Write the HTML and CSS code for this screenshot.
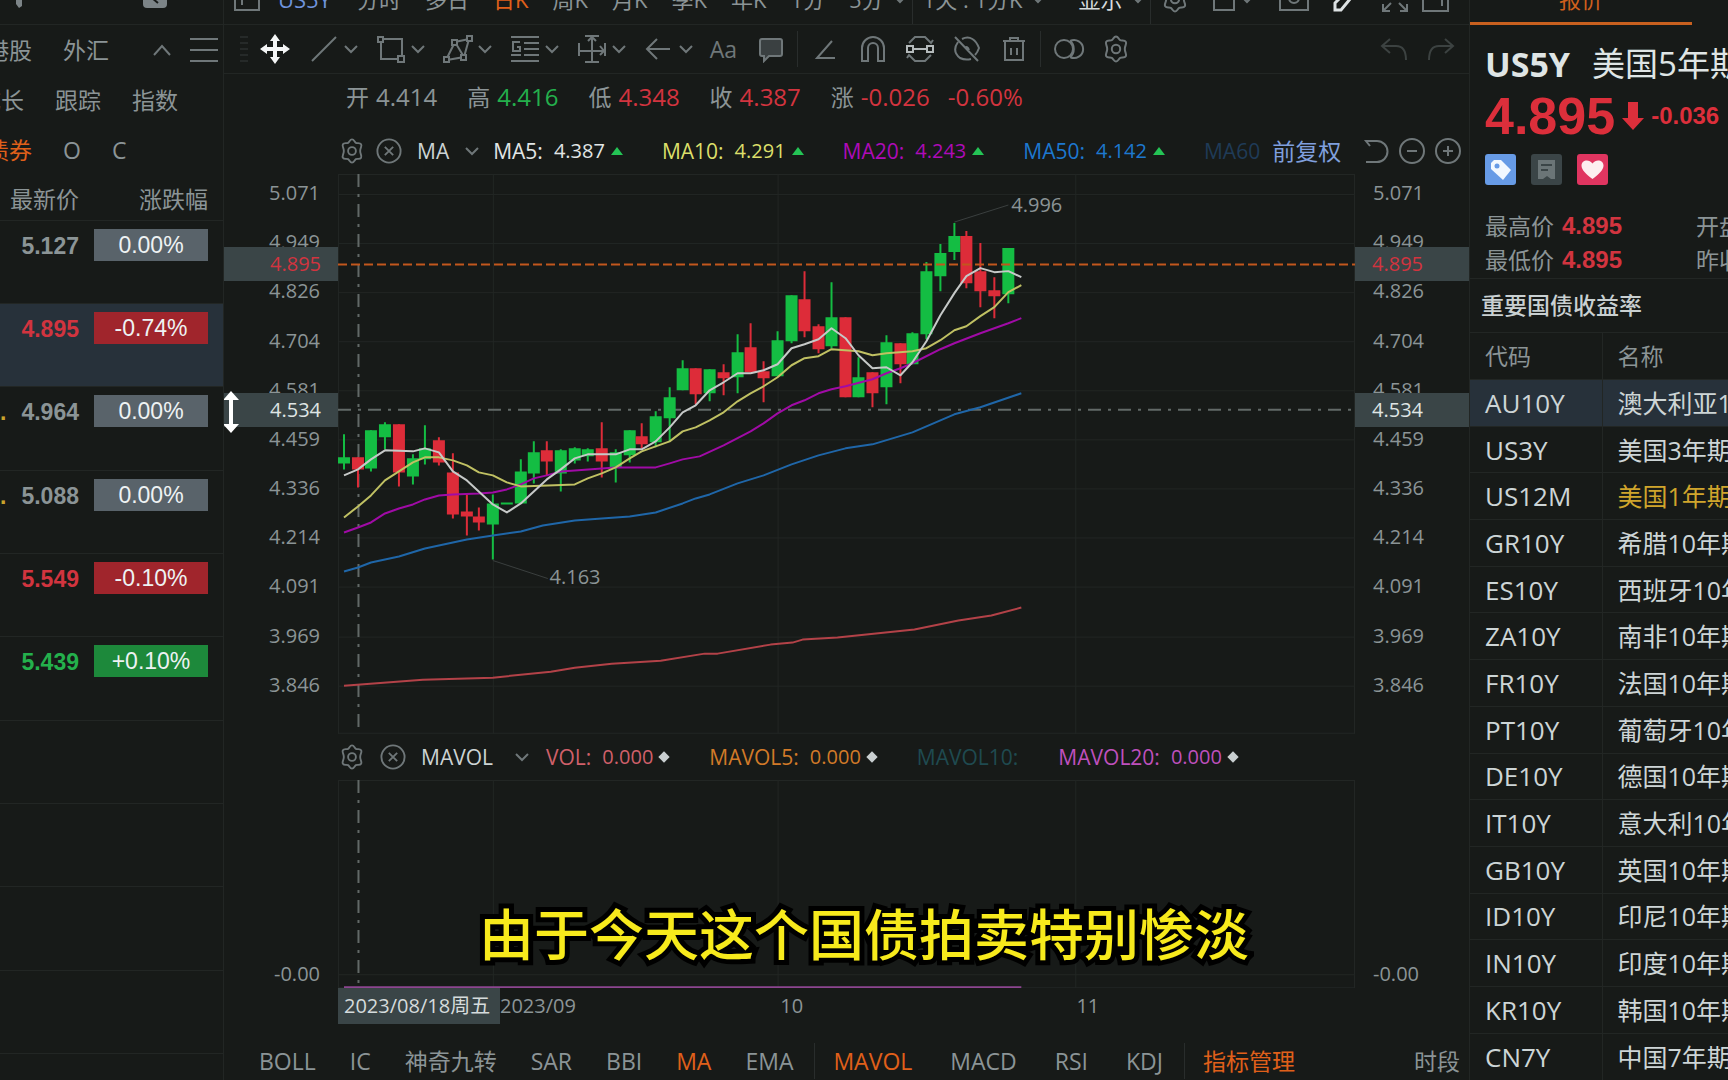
FILE: index.html
```html
<!DOCTYPE html>
<html lang="zh-CN">
<head>
<meta charset="utf-8">
<title>US5Y 美国5年期国债</title>
<link rel="stylesheet" href="styles.css">
</head>
<body>
<svg class="defs" aria-hidden="true">
  <symbol id="gear" viewBox="0 0 28 28"><path d="M14 1.5c2.300 0 2.600 2.800 4.200 3.700s4.300-.6 5.600 1.500-1 3.700-1 7.300 2.200 5.200 1 7.300-4 .6-5.600 1.500-1.900 3.700-4.200 3.700-2.600-2.800-4.200-3.700-4.300.6-5.600-1.500 1-3.700 1-7.300-2.200-5.200-1-7.300 4-.6 5.600-1.500S11.700 1.500 14 1.500z"/><circle cx="14" cy="14" r="4.200"/></symbol>
  <symbol id="close" viewBox="0 0 28 28"><circle cx="14" cy="14" r="12.500"/><path d="M9.500 9.500l9 9M18.500 9.500l-9 9"/></symbol>
  <symbol id="down" viewBox="0 0 14 14"><path d="M1 4l6 6 6-6"/></symbol>
</svg>

<div class="app">
  <aside class="watch">
    <header class="bar">
      <div class="bar-in watch-bar">
        <svg class="ic solid" width="10" height="20" viewBox="0 0 10 20"><path d="M2 0h6v17l-3 2-3-4z"/></svg>
        <svg class="ic solid" width="24" height="18" viewBox="0 0 24 18"><rect width="24" height="18" rx="4"/><path class="cut" d="M9 8l6 5"/></svg>
      </div>
    </header>
    <nav class="cats">
      <div class="cat-row r1">
        <a href="#">港股</a><a href="#">外汇</a>
        <button class="plain fold" aria-label="收起"><svg class="ic" width="20" height="14" viewBox="0 0 20 14"><path d="M2 12l8-9 8 9"/></svg></button>
        <button class="plain" aria-label="菜单"><svg class="ic" width="28" height="28" viewBox="0 0 28 28"><path d="M0 3h28M0 14h28M0 25h28"/></svg></button>
      </div>
      <div class="cat-row r2"><a href="#">成长</a><a href="#">跟踪</a><a href="#">指数</a></div>
      <div class="cat-row r3"><a href="#" class="on">债券</a><a href="#">O</a><a href="#">C</a></div>
    </nav>
    <table class="list">
      <colgroup><col class="c-dot"><col class="c-price"><col></colgroup>
      <thead><tr><th colspan="2">最新价</th><th>涨跌幅</th></tr></thead>
      <tbody>
        <tr><td></td><td>5.127</td><td><span class="pct">0.00%</span></td></tr>
        <tr class="sel"><td></td><td class="dn">4.895</td><td><span class="pct bg-dn">-0.74%</span></td></tr>
        <tr><td class="dot">.</td><td>4.964</td><td><span class="pct">0.00%</span></td></tr>
        <tr><td class="dot">.</td><td>5.088</td><td><span class="pct">0.00%</span></td></tr>
        <tr><td></td><td class="dn">5.549</td><td><span class="pct bg-dn">-0.10%</span></td></tr>
        <tr><td></td><td class="up">5.439</td><td><span class="pct bg-up">+0.10%</span></td></tr>
        <tr><td></td><td></td><td></td></tr>
        <tr><td></td><td></td><td></td></tr>
        <tr><td></td><td></td><td></td></tr>
        <tr><td></td><td></td><td></td></tr>
        <tr><td></td><td></td><td></td></tr>
      </tbody>
    </table>
  </aside>

  <main class="center">
    <header class="bar">
      <div class="bar-in periods">
        <svg class="ic" width="26" height="24" viewBox="0 0 26 24"><path d="M1 0v23h24V0M8 0v18"/></svg>
        <a href="#" class="sym">US5Y</a>
        <a href="#">分时</a><a href="#">多日</a><a href="#" class="on">日K</a><a href="#">周K</a><a href="#">月K</a><a href="#">季K</a><a href="#">年K</a><a href="#">1分</a><a href="#">5分</a>
        <svg class="ic chev" width="14" height="14"><use href="#down"/></svg>
        <span class="sep"></span>
        <a href="#">1天 : 1分K</a>
        <svg class="ic chev" width="14" height="14"><use href="#down"/></svg>
        <a href="#" class="bright">显示</a>
        <svg class="ic chev" width="14" height="14"><use href="#down"/></svg>
        <span class="sep"></span>
        <svg class="ic" width="28" height="28"><use href="#gear"/></svg>
        <svg class="ic" width="42" height="24" viewBox="0 0 42 24"><path d="M1 0v23h20V0M30 11l4 4 4-4"/></svg>
        <svg class="ic" width="30" height="24" viewBox="0 0 30 24"><path d="M1 0v23h28V0"/><circle cx="15" cy="11" r="5"/></svg>
        <svg class="ic pen" width="24" height="26" viewBox="0 0 24 26"><path d="M17 2l5 5L8 24H2v-7z"/></svg>
        <svg class="ic" width="28" height="28" viewBox="0 0 28 28"><path d="M10 18l-8 8M2 19v7h7M18 18l8 8M26 19v7h-7"/></svg>
        <svg class="ic side" width="28" height="26" viewBox="0 0 28 26"><path d="M1 0v25h25V0M20 8v12"/></svg>
      </div>
    </header>

    <div class="tools">
      <svg class="grip" width="8" height="28" viewBox="0 0 8 28"><path d="M0 2h8M0 8h8M0 14h8M0 20h8M0 26h8"/></svg>
      <button class="tool move" aria-label="移动"><svg width="30" height="30" viewBox="0 0 30 30"><path d="M15 0l5 7h-3v6h6v-3l7 5-7 5v-3h-6v6h3l-5 7-5-7h3v-6H7v3l-7-5 7-5v3h6V7h-3z"/></svg></button>
      <button class="tool drop" aria-label="线段"><svg class="ic" width="30" height="30" viewBox="0 0 30 30"><path d="M3 27L27 3"/></svg><svg class="ic" width="14" height="14"><use href="#down"/></svg></button>
      <button class="tool drop" aria-label="矩形"><svg class="ic" width="30" height="30" viewBox="0 0 30 30"><path d="M8 5h18v17M5 8v17h17"/><rect x="2" y="3" width="5" height="5"/><rect x="22" y="22" width="6" height="6"/></svg><svg class="ic" width="14" height="14"><use href="#down"/></svg></button>
      <button class="tool drop" aria-label="形态"><svg class="ic" width="30" height="30" viewBox="0 0 30 30"><path d="M4 24l8-16 14-3-5 18-17 3M12 8l9 15"/><rect class="fillbg" x="1" y="23" width="5" height="5"/><rect class="fillbg" x="9" y="6" width="5" height="5"/><rect class="fillbg" x="24" y="2" width="5" height="5"/><rect class="fillbg" x="18" y="21" width="5" height="5"/></svg><svg class="ic" width="14" height="14"><use href="#down"/></svg></button>
      <button class="tool drop" aria-label="黄金分割"><svg class="ic" width="30" height="30" viewBox="0 0 30 30"><path d="M1 3h28M14 9h15M14 15h15M14 21h15M1 27h28M1 21h10M10 8H3v9h7v-4H7"/></svg><svg class="ic" width="14" height="14"><use href="#down"/></svg></button>
      <button class="tool drop" aria-label="测量"><svg class="ic" width="30" height="30" viewBox="0 0 30 30"><path d="M8 2h14M8 28h14M15 3v24M2 9v13M28 9v13M3 17h24M11 7l4-4 4 4M23 12l4 5-4 4"/></svg><svg class="ic" width="14" height="14"><use href="#down"/></svg></button>
      <button class="tool drop" aria-label="箭头"><svg class="ic" width="30" height="30" viewBox="0 0 30 30"><path d="M26 15H3M13 5L3 15l10 10"/></svg><svg class="ic" width="14" height="14"><use href="#down"/></svg></button>
      <button class="tool aa">Aa</button>
      <button class="tool" aria-label="注释"><svg class="ic" width="26" height="28" viewBox="0 0 26 28"><path class="tint" d="M4 4h18a2 2 0 012 2v13a2 2 0 01-2 2H11l-5 5v-5H4a2 2 0 01-2-2V6a2 2 0 012-2z"/></svg></button>
      <span class="sep"></span>
      <button class="tool" aria-label="角度"><svg class="ic" width="24" height="28" viewBox="0 0 24 28"><path d="M18 6L3 23h18"/></svg></button>
      <button class="tool" aria-label="磁吸"><svg class="ic" width="26" height="28" viewBox="0 0 26 28"><path d="M2 26V13a11 11 0 0122 0v13h-6V13a5 5 0 00-10 0v13z"/></svg></button>
      <button class="tool" aria-label="连续绘制"><svg class="ic lit" width="28" height="28" viewBox="0 0 28 28"><path class="dim" d="M3 8l6-6h10l6 6 2-3M25 20l-6 6H9l-6-6-2 3"/><path d="M8 14h12"/><rect x="1" y="11" width="6" height="6"/><rect x="21" y="11" width="6" height="6"/></svg></button>
      <button class="tool" aria-label="隐藏"><svg class="ic" width="28" height="28" viewBox="0 0 28 28"><path d="M9 4c8-4 14 1 17 9-1 3-2 5-4 7M5 7c-5 7-3 12 2 16 4 2 7 2 11 1M2 2l23 24M12 13c1-2 3-1 4 2"/></svg></button>
      <button class="tool" aria-label="删除"><svg class="ic" width="26" height="28" viewBox="0 0 26 28"><path d="M2 6h22M9 5V3h8v2M4 6v19h18V6M10 13v7M16 13v7"/></svg></button>
      <span class="sep"></span>
      <button class="tool" aria-label="对比"><svg class="ic" width="32" height="24" viewBox="0 0 32 24"><circle cx="11" cy="12" r="9"/><path d="M17 4a9 9 0 110 16M17 4c5 3 5 13 0 16"/></svg></button>
      <button class="tool" aria-label="设置"><svg class="ic" width="28" height="28"><use href="#gear"/></svg></button>
      <button class="tool undo" aria-label="撤销"><svg class="ic" width="28" height="28" viewBox="0 0 28 28"><path d="M10 4L2 11l8 7M2 11h14c6 0 10 4 10 14"/></svg></button>
      <button class="tool" aria-label="重做"><svg class="ic faint" width="28" height="28" viewBox="0 0 28 28"><path d="M18 4l8 7-8 7M26 11H12C6 11 2 15 2 25"/></svg></button>
    </div>

    <div class="ohlc">
      <span><b>开</b><i>4.414</i></span>
      <span><b>高</b><i class="up">4.416</i></span>
      <span><b>低</b><i class="dn">4.348</i></span>
      <span><b>收</b><i class="dn">4.387</i></span>
      <span><b>涨</b><i class="dn">-0.026</i><i class="dn pc">-0.60%</i></span>
    </div>

    <div class="legend main-legend">
      <button class="plain" aria-label="指标设置"><svg class="ic" width="26" height="26"><use href="#gear"/></svg></button>
      <button class="plain x1" aria-label="关闭指标"><svg class="ic" width="26" height="26"><use href="#close"/></svg></button>
      <button class="plain name">MA <svg class="ic" width="14" height="14"><use href="#down"/></svg></button>
      <span class="ind white"><b>MA5:</b><i>4.387</i><s class="tri"></s></span>
      <span class="ind yellow"><b>MA10:</b><i>4.291</i><s class="tri"></s></span>
      <span class="ind magenta"><b>MA20:</b><i>4.243</i><s class="tri"></s></span>
      <span class="ind blue"><b>MA50:</b><i>4.142</i><s class="tri"></s></span>
      <span class="ind navy"><b>MA60</b></span>
      <a href="#" class="adj">前复权</a>
      <span class="zooms">
        <button class="plain" aria-label="重置"><svg class="ic" width="26" height="26" viewBox="0 0 26 26"><path d="M7 8L3 3h11a10 10 0 010 21H3"/></svg></button>
        <button class="plain" aria-label="缩小"><svg class="ic" width="26" height="26" viewBox="0 0 26 26"><circle cx="13" cy="13" r="12"/><path d="M8 13h10"/></svg></button>
        <button class="plain" aria-label="放大"><svg class="ic" width="26" height="26" viewBox="0 0 26 26"><circle cx="13" cy="13" r="12"/><path d="M8 13h10M13 8v10"/></svg></button>
      </span>
    </div>

    <section class="pane price-pane">
      <div class="axis left">
        <span>5.071</span><span>4.949</span><span>4.826</span><span>4.704</span><span>4.581</span><span>4.459</span><span>4.336</span><span>4.214</span><span>4.091</span><span>3.969</span><span>3.846</span>
        <em class="tag dn" style="top:16.1%">4.895</em><em class="tag" style="top:42.1%">4.534</em>
        <svg class="cursor" width="18" height="44" viewBox="0 0 18 44"><path d="M9 1l8 9h-6v24h6L9 43 1 34h6V10H1z"/></svg>
      </div>
      <div class="plot">
        <svg class="chart" viewBox="0 0 1018 559" preserveAspectRatio="none">
          <path class="grid" d="M0 .5H1018M0 558.500H1018M.5 0V559M1017.500 0V559M155.500 0V559M440.500 0V559M738.500 0V559M0 20.500H1018M0 69.500H1018M0 118.500H1018M0 167.500H1018M0 216.500H1018M0 265.500H1018M0 314.500H1018M0 363.500H1018M0 412.500H1018M0 462.500H1018M0 511.500H1018"/>
          <path class="cross" d="M20.500 0V559M0 235.500H1018"/>
          <path class="leader" d="M155 386l55 18M617 48l54-17"/>
          <path class="wick g" d="M6 260V295M33 256V297M47 248V275M75 280V310M87 251V290M155 320V385M183 285V329M196 267V309M223 275V317M237 273V289M250 274V287M278 275V308M292 256V288M318 237V273M332 213V267M345 186V216M372 195V227M400 160V219M440 157V202M454 121V169M494 108V174M521 183V223M549 161V230M575 158V190M589 88V165M603 70V117M617 49V86M671 74V129"/>
          <path class="wick r" d="M20 283V313M61 250V312M101 263V291M115 279V344M129 320V361M141 333V356M209 267V301M264 248V303M304 249V274M358 194V230M386 190V221M413 149V198M426 187V228M467 97V163M481 150V179M508 143V223M535 198V233M563 169V209M629 57V114M643 69V133M657 103V144"/>
          <path class="body g" d="M6 283V289M33 256V294M47 250V263M75 284V302M87 274V285M155 329V350M169 328V330M183 297V329M196 278V299M223 276V299M237 274V286M250 275V282M278 278V293M292 256V281M318 242V268M332 223V244M345 194V216M372 195V219M400 178V203M440 166V202M454 121V167M494 143V172M521 203V223M549 168V213M575 159V190M589 97V160M603 79V102M617 62V78M671 74V120"/>
          <path class="body r" d="M20 283V295M61 250V298M101 266V288M115 298V340M129 337V342M141 342V348M209 276V287M264 274V287M304 262V270M358 194V220M386 198V204M413 173V198M426 197V204M467 125V157M481 152V175M508 143V223M535 198V219M563 169V190M629 62V109M643 97V117M657 116V122"/>
          <path class="last" d="M0 90.500H1018"/>
          <polyline class="ma m250" points="6,511 85,505 155,503 213,497 237,493 274,489 323,486 367,479 380,479 433,470 455,468 465,465 500,463 577,455 621,446 654,441 684,433"/>
          <polyline class="ma m50" points="6,397 20,393 33,388 61,382 87,374 115,368 129,365 155,361 183,357 205,351 237,346 264,344 292,342 318,338 345,329 358,324 372,320 400,309 426,301 454,290 481,281 508,274 535,270 575,258 617,240 643,233 684,219"/>
          <polyline class="ma m20" points="6,358 20,353 33,348 47,339 61,334 75,330 87,325 101,321 115,320 141,319 155,318 169,315 183,310 196,304 209,301 223,297 237,296 264,294 278,293 318,293 332,289 345,285 362,282 386,271 413,257 426,249 440,239 454,231 467,226 481,219 494,215 508,212 535,205 549,199 563,194 575,189 603,175 617,169 643,159 671,149 684,144"/>
          <polyline class="ma m10" points="6,343 20,332 33,321 47,306 61,297 75,288 87,283 101,283 115,286 129,291 141,298 155,301 169,308 183,312 237,310 250,304 264,299 278,293 292,284 304,277 332,267 345,257 358,253 372,246 386,238 400,227 413,219 426,212 440,203 454,191 467,184 481,182 494,175 521,177 535,181 549,179 575,177 589,174 603,166 617,156 629,152 643,142 657,133 671,118 684,111"/>
          <polyline class="ma m5" points="6,301 20,295 33,285 47,276 75,277 87,274 101,278 115,297 129,306 155,330 169,338 183,329 209,305 223,295 237,284 250,280 278,280 292,275 304,275 318,267 332,253 345,238 358,231 372,216 386,208 400,199 413,199 426,196 440,190 454,174 467,170 481,165 494,154 508,164 521,181 535,194 549,193 563,201 575,188 589,167 603,141 617,119 629,102 643,94 657,98 671,97 684,103"/>
        </svg>
        <em class="mark" style="left:66.2%;top:5.5%">4.996</em>
        <em class="mark" style="left:20.8%;top:72%">4.163</em>
      </div>
      <div class="axis right">
        <span>5.071</span><span>4.949</span><span>4.826</span><span>4.704</span><span>4.581</span><span>4.459</span><span>4.336</span><span>4.214</span><span>4.091</span><span>3.969</span><span>3.846</span>
        <em class="tag dn" style="top:16.1%">4.895</em><em class="tag" style="top:42.1%">4.534</em>
      </div>
    </section>

    <div class="legend vol-legend">
      <button class="plain" aria-label="指标设置"><svg class="ic" width="26" height="26"><use href="#gear"/></svg></button>
      <button class="plain x2" aria-label="关闭指标"><svg class="ic" width="26" height="26"><use href="#close"/></svg></button>
      <button class="plain name">MAVOL <svg class="ic" width="14" height="14"><use href="#down"/></svg></button>
      <span class="ind pink"><b>VOL:</b><i>0.000</i><s class="dia"></s></span>
      <span class="ind orange"><b>MAVOL5:</b><i>0.000</i><s class="dia"></s></span>
      <span class="ind teal"><b>MAVOL10:</b></span>
      <span class="ind violet"><b>MAVOL20:</b><i>0.000</i><s class="dia"></s></span>
    </div>

    <section class="pane vol-pane">
      <div class="axis left end"><span>-0.00</span></div>
      <div class="plot">
        <svg class="chart" viewBox="0 0 1018 208" preserveAspectRatio="none">
          <path class="grid" d="M0 .5H1018M0 207.500H1018M.5 0V208M1017.500 0V208M155.500 0V208M440.500 0V208M738.500 0V208M0 194.500H1018"/>
          <path class="cross" d="M20.500 0V206"/>
          <path class="volline" d="M6 207H684"/>
        </svg>
      </div>
      <div class="axis right end"><span>-0.00</span></div>
    </section>

    <div class="dates">
      <span class="cur">2023/08/18周五</span><span>2023/09</span><span>10</span><span>11</span>
    </div>

    <nav class="inds">
      <div class="grp"><a href="#">BOLL</a><a href="#">IC</a><a href="#">神奇九转</a><a href="#">SAR</a><a href="#">BBI</a><a href="#" class="on">MA</a><a href="#">EMA</a></div>
      <span class="sep"></span>
      <div class="grp wide"><a href="#" class="on">MAVOL</a><a href="#">MACD</a><a href="#">RSI</a><a href="#">KDJ</a></div>
      <span class="sep"></span>
      <a href="#" class="on">指标管理</a>
      <a href="#" class="seg">时段</a>
    </nav>
  </main>

  <aside class="quote">
    <header class="bar"><a href="#" class="tab">报价</a></header>
    <div class="head">
      <h1><b>US5Y</b><span>美国5年期国债</span></h1>
      <div class="px"><strong>4.895</strong><svg width="22" height="28" viewBox="0 0 22 28"><path d="M6 0h10v16h6L11 28 0 16h6z"/></svg><span>-0.036</span></div>
      <div class="badges">
        <button class="plain" aria-label="标签"><svg width="31" height="31" viewBox="0 0 31 31"><rect width="31" height="31" rx="3" fill="#679be6"/><path d="M6 9l3-3h7l10 10-8 10L6 15z" fill="#f2f8ff"/><circle cx="12" cy="12" r="2.500" fill="#679be6"/></svg></button>
        <button class="plain" aria-label="笔记"><svg width="31" height="31" viewBox="0 0 31 31"><rect width="31" height="31" rx="3" fill="#3b4547"/><path d="M7 6h17v19h-4l-4-3-4 3H7z" fill="#6b7577"/><path d="M10 11h11M10 16h7" stroke="#3b4547" stroke-width="2"/></svg></button>
        <button class="plain" aria-label="自选"><svg width="31" height="31" viewBox="0 0 31 31"><rect width="31" height="31" rx="3" fill="#e03560"/><path d="M15.500 25C9 20 4.500 16 4.500 11.500 4.500 6 12 4.500 15.500 9.500 19 4.500 26.500 6 26.500 11.500 26.500 16 22 20 15.500 25z" fill="#fdeef0"/></svg></button>
      </div>
      <dl class="stats">
        <dt>最高价</dt><dd>4.895</dd><dt>开盘价</dt>
        <dt>最低价</dt><dd>4.895</dd><dt>昨收价</dt>
      </dl>
    </div>
    <h2>重要国债收益率</h2>
    <div class="ytab">
      <table>
        <colgroup><col class="c-code"><col></colgroup>
        <thead><tr><th>代码</th><th>名称</th></tr></thead>
        <tbody>
          <tr class="sel"><td>AU10Y</td><td>澳大利亚10年期</td></tr>
          <tr><td>US3Y</td><td>美国3年期</td></tr>
          <tr><td>US12M</td><td class="gold">美国1年期</td></tr>
          <tr><td>GR10Y</td><td>希腊10年期</td></tr>
          <tr><td>ES10Y</td><td>西班牙10年期</td></tr>
          <tr><td>ZA10Y</td><td>南非10年期</td></tr>
          <tr><td>FR10Y</td><td>法国10年期</td></tr>
          <tr><td>PT10Y</td><td>葡萄牙10年期</td></tr>
          <tr><td>DE10Y</td><td>德国10年期</td></tr>
          <tr><td>IT10Y</td><td>意大利10年期</td></tr>
          <tr><td>GB10Y</td><td>英国10年期</td></tr>
          <tr><td>ID10Y</td><td>印尼10年期</td></tr>
          <tr><td>IN10Y</td><td>印度10年期</td></tr>
          <tr><td>KR10Y</td><td>韩国10年期</td></tr>
          <tr><td>CN7Y</td><td>中国7年期</td></tr>
        </tbody>
      </table>
    </div>
  </aside>
</div>
<p class="caption">由于今天这个国债拍卖特别惨淡</p>
</body>
</html>
```
FILE: styles.css
```css
:root {
  --bg: #171a18;
  --line: #222624;
  --text: #8b9496;
  --bright: #d5dbdc;
  --sel: #27313a;
  --tag: #3a4547;
  --up: #24b04c;
  --dn: #d2343f;
  --on: #e0601a;
}

* { box-sizing: border-box; }

body {
  margin: 0;
  background: var(--bg);
  color: var(--text);
  font: 23px/28px "Open Sans", "Noto Sans CJK SC", sans-serif;
  overflow: hidden;
}

a { color: inherit; text-decoration: none; white-space: nowrap; }
b, i, em, s { font-weight: inherit; font-style: normal; text-decoration: none; }
h1, h2, p, dl, dd { margin: 0; }
button { font: inherit; color: inherit; background: none; border: 0; padding: 0; }
.plain { display: flex; align-items: center; }
.defs { position: absolute; width: 0; height: 0; }
.ic { display: block; fill: none; stroke: #6f7779; stroke-width: 2; flex: none; }
.up { color: var(--up); }
.dn { color: var(--dn); }
.on { color: var(--on); }

.app {
  display: grid;
  grid-template-columns: 224px minmax(0, 1fr) 259px;
  height: 100vh;
}
.watch, .center, .quote { overflow: hidden; min-width: 0; }

/* Top bars: the row is taller than the strip and is cut off by the window edge */
.bar {
  display: flex;
  align-items: flex-end;
  flex: none;
  height: 25px;
  overflow: hidden;
  border-bottom: 1px solid var(--line);
}
.bar-in { display: flex; align-items: center; flex: 1 0 auto; height: 50px; }
.sep { flex: none; width: 1px; height: 36px; background: #292d2c; }

/* Watch list */
.watch { border-right: 1px solid var(--line); }
.watch-bar { padding: 0 56px 0 14px; justify-content: space-between; }
.solid { fill: #7c8487; stroke: none; }
.cut { stroke: var(--bg); stroke-width: 2; }
.cat-row { display: flex; align-items: center; gap: 31px; height: 50px; }
.r1 { margin-left: -14px; padding-right: 5px; }
.r2 { margin-left: -22px; }
.r3 { margin-left: -14px; }
.fold { margin-left: auto; }
.fold + .plain { margin-left: -13px; }
.list { width: 100%; table-layout: fixed; border-collapse: collapse; }
.c-dot { width: 8px; }
.c-price { width: 71px; }
.list th {
  height: 45px;
  padding: 3px 0 0;
  font-weight: 400;
  text-align: right;
  border-bottom: 1px solid var(--line);
}
.list th:last-child { padding-right: 15px; }
.list td {
  height: 83px;
  padding: 8px 0 0;
  vertical-align: top;
  border-bottom: 1px solid var(--line);
  font: 700 23px/34px "Liberation Sans", sans-serif;
  text-align: right;
}
.list tr:nth-child(3n) td { height: 84px; }
.list td:last-child { padding: 8px 15px 0 15px; }
.list .dot { color: #c9a32c; text-align: left; }
.sel { background: var(--sel); }
.pct {
  display: block;
  background: #59636a;
  color: #eef2f3;
  font-weight: 400;
  line-height: 32px;
  text-align: center;
}
.bg-dn { background: #a0252c; }
.bg-up { background: #1d893b; }

/* Centre */
.center { display: flex; flex-direction: column; }
.periods { padding-left: 10px; gap: 24px; font-size: 22px; }
.periods .sym { color: #6f93dc; margin-left: -6px; margin-right: 2px; }
.periods .chev { margin-left: -15px; }
.periods .sep { margin-left: -19px; margin-right: -14px; align-self: flex-end; height: 40px; }
.periods .bright { color: var(--bright); margin-left: 9px; }
.periods .pen { stroke: #dde2e3; stroke-width: 3; }
.periods .side { margin-left: -11px; }

.tools {
  display: flex;
  align-items: center;
  flex: none;
  height: 49px;
  padding: 0 5px 0 16px;
  border-bottom: 1px solid var(--line);
}
.grip { stroke: #262a29; stroke-width: 2; }
.tool { display: flex; align-items: center; justify-content: center; flex: none; width: 47px; height: 40px; }
.move { width: 54px; fill: #f4f6f6; }
.drop { width: 67px; gap: 5px; justify-content: flex-start; padding-left: 7px; }
.aa { margin-left: -4px; color: #6f7779; }
.tint { fill: #3a4041; }
.fillbg { fill: var(--bg); }
.lit { stroke: #b4babb; }
.dim { stroke: #6f7779; }
.tools .sep { margin: 0 4px 0 3px; }
.undo { margin-left: auto; }
.undo .ic, .faint { stroke: #3c4241; }

.ohlc { display: flex; align-items: center; flex: none; gap: 30px; height: 46px; padding-left: 122px; font-size: 24px; white-space: nowrap; }
.ohlc span { display: flex; gap: 7px; }
.ohlc b { font-size: 23px; }
.ohlc .pc { margin-left: 11px; }

.legend { display: flex; align-items: center; flex: none; padding: 0 8px 0 115px; font-size: 21px; white-space: nowrap; }
.main-legend { height: 54px; padding-top: 8px; }
.vol-legend { height: 46px; }
.x1 { margin-left: 11px; }
.x2 { margin-left: 15px; }
.name { gap: 16px; margin: 0 14px 0 15px; color: #ccd3d4; }
.vol-legend .name { gap: 22px; margin-right: 17px; }
.ind { display: flex; align-items: center; gap: 11px; margin-right: 39px; }
.vol-legend .ind { margin-right: 40px; }
.ind i { font-size: 20px; }
.tri { width: 0; height: 0; margin-left: -5px; border: 6px solid transparent; border-top: 0; border-bottom: 8px solid #24c455; }
.dia { width: 8px; height: 8px; margin-left: -4px; margin-right: 1px; background: #c9cfd0; transform: rotate(45deg); }
.white { color: #e2e6e6; }
.yellow { color: #dcdf6a; }
.magenta { color: #ae0bb8; }
.blue { color: #1d78cf; }
.main-legend .navy { color: #1f3b57; margin-right: 12px; }
.pink { color: #d0606a; }
.orange { color: #d27a28; }
.teal { color: #1f4a50; }
.violet { color: #bf50bd; }
.adj { color: #7f9fdd; font-size: 23px; }
.zooms { display: flex; gap: 10px; margin-left: auto; }

.pane { display: grid; grid-template-columns: 114px minmax(0, 1fr) 114px; min-height: 0; }
.price-pane { flex: 559 1 0; }
.vol-pane { flex: 208 1 0; }
.plot { position: relative; min-height: 0; }
.chart { display: block; width: 100%; height: 100%; }
.axis { position: relative; display: flex; flex-direction: column; justify-content: space-between; padding: 5px 18px 35px; font-size: 20px; }
.left { text-align: right; }
.axis.end { justify-content: flex-end; padding-bottom: 0; }
.tag { position: absolute; left: 0; right: 0; padding: 0 17px; line-height: 34px; background: var(--tag); transform: translateY(-50%); color: #dfe4e4; }
.tag.dn { color: #d2343f; }
.cursor { position: absolute; left: -2px; top: 42.5%; fill: #fff; transform: translateY(-50%); }
.mark { position: absolute; font-size: 20px; transform: translateY(-50%); }

.chart path, .chart polyline { fill: none; vector-effect: non-scaling-stroke; }
.grid { stroke: var(--line); }
.cross { stroke: #626967; stroke-width: 2; stroke-dasharray: 13 7 3 7; }
.leader { stroke: #3a3f3e; }
.wick { stroke-width: 2; }
.body { stroke-width: 12; }
.g { stroke: #14bd43; }
.r { stroke: #dd2c39; }
.last { stroke: #c2571d; stroke-width: 2; stroke-dasharray: 9 4; }
.ma { stroke-width: 2; stroke-linejoin: round; }
.m5 { stroke: #c6c9c8; }
.m10 { stroke: #c0c163; }
.m20 { stroke: #a00ba6; }
.m50 { stroke: #1f66a8; }
.m250 { stroke: #b34248; }
.volline { stroke: #8d4690; stroke-width: 2; }

.dates { display: grid; grid-template-columns: 162px 282fr 298fr 395fr; flex: none; height: 36px; padding-left: 114px; font-size: 20px; line-height: 36px; white-space: nowrap; }
.cur { background: var(--tag); color: #d5dbdc; padding-left: 6px; }

.inds { display: flex; align-items: center; flex: none; height: 56px; padding: 18px 9px 0 35px; }
.grp { display: flex; gap: 34px; }
.grp.wide { gap: 38px; }
.inds .sep { margin: 0 18px 0 21px; }
.seg { margin-left: auto; }

/* Quote panel */
.quote { display: flex; flex-direction: column; border-left: 1px solid var(--line); white-space: nowrap; }
.tab { width: 222px; height: 50px; line-height: 48px; font-size: 22px; text-align: center; color: #cf601d; border-bottom: 3px solid #c8601f; flex: none; }
.quote .bar { border-bottom-width: 0; }
.head { padding: 17px 0 1px 15px; border-bottom: 1px solid var(--line); }
h1 { display: flex; gap: 22px; font-size: 33px; line-height: 44px; font-weight: 400; color: #dfe5e5; }
h1 b { font-size: 34px; }
.px { display: flex; align-items: center; gap: 7px; margin-top: 4px; height: 52px; color: #dc2f3b; fill: #dc2f3b; font-family: "Liberation Sans", sans-serif; }
h1 b, .px strong, .px span { font-weight: 700; }
.px strong { font-size: 52px; line-height: 52px; }
.px span { font-size: 24px; }
.badges { display: flex; gap: 15px; margin-top: 12px; }
.stats { display: grid; grid-template-columns: 77px 134px 80px; margin-top: 24px; line-height: 34px; }
.stats dd { color: var(--dn); font: 700 24px/34px "Liberation Sans", sans-serif; }
.stats dt { font-size: 23px; }
h2 { padding-left: 11px; font-size: 23px; line-height: 53px; font-weight: 500; color: #c9d0d1; }
.ytab { flex: 1; min-height: 0; }
.ytab table { width: 100%; height: 100%; table-layout: fixed; border-collapse: collapse; }
.c-code { width: 132px; }
.ytab th, .ytab td { height: 46px; padding: 0 0 0 15px; text-align: left; border-top: 1px solid var(--line); overflow: hidden; }
.ytab th { height: 47px; font-weight: 400; }
.ytab td { color: #cdd5d6; font-size: 25px; }
.ytab td:first-child, .ytab th:first-child { border-right: 1px solid var(--line); }
.ytab td:first-child { font-size: 26px; }
.ytab .gold { color: #d0a52c; }

.caption {
  position: fixed;
  left: 0;
  right: 0;
  bottom: 119px;
  text-align: center;
  font: 500 55px/60px "Noto Sans CJK SC", sans-serif;
  color: #f7ea1c;
  -webkit-text-stroke: 10px #000;
  paint-order: stroke fill;
  stroke-linejoin: round;
  pointer-events: none;
}
```
